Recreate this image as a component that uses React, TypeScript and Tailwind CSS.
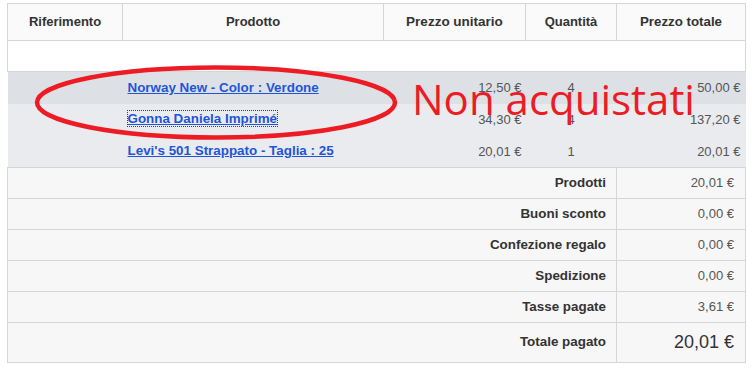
import React from 'react';

type Product = { name: string; unit: string; qty: number; total: string; focused?: boolean; dark?: boolean };

const products: Product[] = [
  { name: 'Norway New - Color : Verdone', unit: '12,50 €', qty: 4, total: '50,00 €', dark: true },
  { name: 'Gonna Daniela Imprimé', unit: '34,30 €', qty: 4, total: '137,20 €', focused: true },
  { name: "Levi's 501 Strappato - Taglia : 25", unit: '20,01 €', qty: 1, total: '20,01 €' },
];

const summary = [
  { label: 'Prodotti', value: '20,01 €' },
  { label: 'Buoni sconto', value: '0,00 €' },
  { label: 'Confezione regalo', value: '0,00 €' },
  { label: 'Spedizione', value: '0,00 €' },
  { label: 'Tasse pagate', value: '3,61 €' },
];

export default function App() {
  return (
    <div className="relative w-[756px] h-[370px] bg-white font-['Liberation_Sans',Arial,sans-serif] text-[13px] text-[#333]">
      <div className="pt-[3px] pl-[7px]">
        <table className="w-[738px] table-fixed border-collapse">
          <colgroup>
            <col className="w-[115px]" />
            <col className="w-[261px]" />
            <col className="w-[142px]" />
            <col className="w-[91px]" />
            <col className="w-[129px]" />
          </colgroup>
          <thead>
            <tr className="h-[37px] bg-[#fafafa]">
              <th className="border border-[#d6d6d6] font-bold">Riferimento</th>
              <th className="border border-[#d6d6d6] font-bold">Prodotto</th>
              <th className="border border-[#d6d6d6] font-bold text-[13.5px]">Prezzo unitario</th>
              <th className="border border-[#d6d6d6] font-bold">Quantità</th>
              <th className="border border-[#d6d6d6] font-bold text-[13.3px]">Prezzo totale</th>
            </tr>
          </thead>
          <tbody>
            <tr className="h-[31px] bg-white">
              <td colSpan={5} className="border border-[#d6d6d6]"></td>
            </tr>
            {products.map(p => (
              <tr key={p.name} className={`h-[32px] ${p.dark ? 'bg-[#dde1e5]' : 'bg-[#e9ebee]'}`}>
                <td></td>
                <td className="pl-[5px]">
                  <a
                    href="#"
                    className={`font-bold text-[13.4px] text-[#1f55d8] underline ${p.focused ? 'outline-1 outline-dotted outline-[#1f3fa0]' : ''}`}
                  >
                    {p.name}
                  </a>
                </td>
                <td className="text-right pr-[4px] text-[#555]">{p.unit}</td>
                <td className="text-center text-[#555]">{p.qty}</td>
                <td className="text-right pr-[5px] text-[#555]">{p.total}</td>
              </tr>
            ))}
            {summary.map(s => (
              <tr key={s.label} className="h-[31px] bg-[#f7f7f7]">
                <td colSpan={4} className="border border-[#d6d6d6] text-right pr-[10px] font-bold text-[13.4px]">{s.label}</td>
                <td className="border border-[#d6d6d6] text-right pr-[11px] text-[#555]">{s.value}</td>
              </tr>
            ))}
            <tr className="h-[40px] bg-[#f7f7f7]">
              <td colSpan={4} className="border border-[#d6d6d6] text-right pr-[10px] font-bold text-[13.4px]">Totale pagato</td>
              <td className="border border-[#d6d6d6] text-right pr-[11px] text-[18px] text-[#333]">20,01 €</td>
            </tr>
          </tbody>
        </table>
      </div>

      <svg className="absolute left-[33px] top-[63px]" width="368" height="80" viewBox="0 0 368 80">
        <ellipse cx="183" cy="39.5" rx="179" ry="35" fill="none" stroke="#ed1c24" strokeWidth="4.5" />
      </svg>
      <div className="absolute left-[412px] top-[71px] font-['Open_Sans',sans-serif] text-[42px] leading-[56px] text-[#ed1c24] whitespace-nowrap">
        Non acquistati
      </div>
    </div>
  );
}
